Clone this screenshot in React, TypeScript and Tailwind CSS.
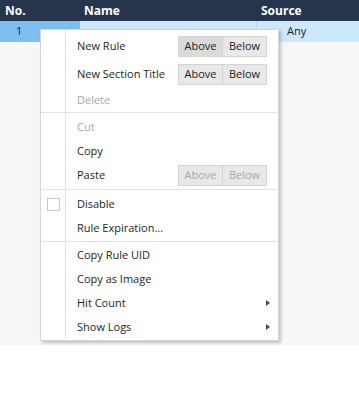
import React from "react";

const font = { fontFamily: '"Open Sans", "Noto Sans", sans-serif' };

function Btns({ disabled, hot }: { disabled?: boolean; hot?: boolean }) {
  const t = disabled ? "text-[#a8a8a8]" : "text-[#222]";
  return (
    <div className="flex h-[21px] border border-[#d4d4d4] bg-[#e8e8e8]">
      <div className={`w-[44px] flex items-center justify-center border-r border-[#d4d4d4] ${hot ? "bg-[#dadada]" : ""} ${t}`}>Above</div>
      <div className={`w-[43px] flex items-center justify-center ${t}`}>Below</div>
    </div>
  );
}

function Item({
  label,
  h = 24,
  disabled,
  right,
  check,
}: {
  label: string;
  h?: number;
  disabled?: boolean;
  right?: React.ReactNode;
  check?: boolean;
}) {
  return (
    <div className={`flex items-center ${h === 28 ? "h-[28px]" : "h-[24px]"}`}>
      <div className="w-[25px] flex justify-center">
        {check && <div className="w-[13px] h-[13px] border border-[#c8c8c8] bg-white" />}
      </div>
      <div className={`pl-[11px] flex-1 ${disabled ? "text-[#a8a8a8]" : "text-[#1e1e1e]"}`}>{label}</div>
      <div className="pr-[11px]">{right}</div>
    </div>
  );
}

const Arrow = () => (
  <div className="mr-[-3px] w-0 h-0 border-y-[3px] border-y-transparent border-l-[4px] border-l-[#444]" />
);

const Sep = () => <div className="h-px bg-[#e3e3e3]" />;

export default function App() {
  return (
    <div className="w-[359px] h-[400px] bg-white relative text-[11px]" style={font}>
      <div className="h-[345px] bg-[#f7f7f7]">
        <div className="flex h-[21px] bg-[#26354c] text-white font-bold text-[12px] items-center">
          <div className="w-[80px] pl-[5px]">No.</div>
          <div className="w-[177px] pl-[4px]">Name</div>
          <div className="flex-1 pl-[4px]">Source</div>
        </div>
        <div className="flex h-[21px] items-center text-[#222] text-[11px]">
          <div className="w-[80px] h-full bg-[#7dbff0] pl-[16px] flex items-center">1</div>
          <div className="w-[177px] h-full bg-[#cde8fb] border-r border-[#b9d9f0]" />
          <div className="flex-1 h-full bg-[#cde8fb] pl-[30px] flex items-center">Any</div>
        </div>
      </div>
      <div className="absolute left-[40px] top-[29px] w-[239px] bg-white border border-[#d6d6d6] shadow-[2px_2px_3px_rgba(0,0,0,0.22)]">
        <div className="absolute left-[24px] top-0 bottom-0 w-px bg-[#e3e3e3]" />
        <div className="relative">
          <div className="pt-[2px]">
            <Item label="New Rule" h={28} right={<Btns hot />} />
            <Item label="New Section Title" h={28} right={<Btns />} />
            <Item label="Delete" disabled />
          </div>
          <Sep />
          <div className="py-[2px]">
            <Item label="Cut" disabled />
            <Item label="Copy" />
            <Item label="Paste" right={<Btns disabled />} />
          </div>
          <Sep />
          <div className="pt-[2px] pb-[1px]">
            <Item label="Disable" check />
            <Item label="Rule Expiration..." />
          </div>
          <Sep />
          <div className="pt-[1px] pb-[1px]">
            <Item label="Copy Rule UID" />
            <Item label="Copy as Image" />
            <Item label="Hit Count" right={<Arrow />} />
            <Item label="Show Logs" right={<Arrow />} />
          </div>
        </div>
      </div>
    </div>
  );
}
